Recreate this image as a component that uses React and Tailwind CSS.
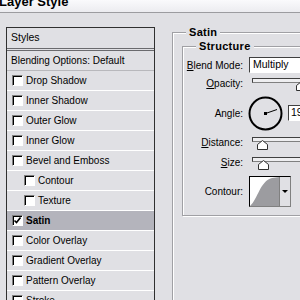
import React from 'react';

const font = { fontFamily: '"Liberation Sans", Arial, sans-serif' };

const styles = [
  { label: 'Drop Shadow' },
  { label: 'Inner Shadow' },
  { label: 'Outer Glow' },
  { label: 'Inner Glow' },
  { label: 'Bevel and Emboss' },
  { label: 'Contour', indent: true },
  { label: 'Texture', indent: true },
  { label: 'Satin', checked: true, active: true },
  { label: 'Color Overlay' },
  { label: 'Gradient Overlay' },
  { label: 'Pattern Overlay' },
  { label: 'Stroke' },
];

const Check = ({ checked }) => (
  <span className="w-[11px] h-[11px] shrink-0 bg-white border border-t-[#808080] border-l-[#808080] border-b-white border-r-white shadow-[inset_1px_1px_0_#000] flex items-center justify-center">
    {checked && (
      <svg width="9" height="9" viewBox="0 0 9 9">
        <path d="M1.5 4.5 L3.5 6.5 L7.5 1.5" stroke="#000" strokeWidth="1.6" fill="none" />
      </svg>
    )}
  </span>
);

const Thumb = ({ left }) => (
  <svg width="11" height="10" viewBox="0 0 11 10" className="absolute top-[0px]" style={{ left }}>
    <path d="M0.5 9.5 L0.5 4.5 L5.5 0.5 L10.5 4.5 L10.5 9.5 Z" fill="#fff" stroke="#303030" />
  </svg>
);

const Slider = ({ pos }) => (
  <div className="relative w-[100px] h-[10px] mt-[6px] shrink-0">
    <div className="h-[5px] bg-[#eeeef0] border border-t-[#404040] border-l-[#404040] border-b-[#808080] border-r-[#808080] -mt-[3px]" />
    <Thumb left={pos} />
  </div>
);

const Label = ({ u, rest }) => (
  <span className="w-[60px] text-right text-[10px] text-black shrink-0">
    {u ? <u>{u}</u> : null}
    {rest}
  </span>
);

export default function App() {
  return (
    <div className="w-[300px] h-[300px] overflow-hidden bg-[#e0e0e4] text-black select-none" style={font}>
      <div className="h-[13px] bg-gradient-to-b from-[#fafafc] to-[#ececf0] border-b border-[#9c9ca0] overflow-hidden">
        <div className="text-[13px] font-bold leading-[13px] -mt-[5px] -ml-[1px]">Layer Style</div>
      </div>
      <div className="flex">
        <div className="ml-[6px] mt-[14px] w-[149px] h-[290px] shrink-0 border border-[#303030] bg-[#e0e0e4]">
          <div className="h-[23px] flex items-center pl-[4px] text-[10.5px] border-b-[3px] border-double border-[#6a6a6e]">Styles</div>
          <div className="h-[20px] flex items-center pl-[4px] text-[10px] border-b border-[#b8b8bc]">Blending Options: Default</div>
          {styles.map((s) => (
            <div
              key={s.label}
              className={`h-[20px] flex items-center gap-[3px] text-[10px] border-b border-white ${s.indent ? 'pl-[17px]' : 'pl-[5px]'} ${s.active ? 'bg-[#b4b4bc] font-bold' : ''}`}
            >
              <Check checked={s.checked} />
              <span>{s.label}</span>
            </div>
          ))}
        </div>
        <div className="ml-[17px] mt-[13px] w-[200px] shrink-0">
          <fieldset className="border border-[#a0a0a4] shadow-[1px_1px_0_#fff,inset_1px_1px_0_#fff] w-[200px] h-[300px]">
            <legend className="ml-[13px] px-[3px] bg-[#e0e0e4] text-[11px] font-bold tracking-[0.3px] leading-[13px]">Satin</legend>
            <fieldset className="ml-[9px] border border-[#a0a0a4] shadow-[1px_1px_0_#fff,inset_1px_1px_0_#fff] w-[200px] pt-[4px] pb-[8px] mt-[1px]">
              <legend className="ml-[13px] px-[3px] bg-[#e0e0e4] text-[11px] font-bold tracking-[0.3px] leading-[13px]">Structure</legend>
              <div className="flex flex-col">
                <div className="h-[16px] flex items-center gap-[6px]">
                  <Label u="B" rest="lend Mode:" />
                  <div className="h-[16px] flex-1 bg-white border border-t-[#404040] border-l-[#404040] border-b-white border-r-white flex items-center pl-[3px] text-[10.5px]">Multiply</div>
                </div>
                <div className="h-[20px] flex items-center gap-[9px]">
                  <Label u="O" rest="pacity:" />
                  <Slider pos={44} />
                </div>
                <div className="h-[34px] mt-[3px] flex items-center gap-[5px]">
                  <Label rest="Angle:" />
                  <svg width="35" height="35" viewBox="0 0 35 35" className="shrink-0">
                    <circle cx="17.5" cy="17.5" r="16" fill="none" stroke="#000" strokeWidth="2" />
                    <line x1="17.5" y1="17.5" x2="29" y2="13.5" stroke="#000" strokeWidth="1" />
                    <rect x="16" y="16" width="3" height="3" fill="#000" />
                  </svg>
                  <div className="h-[16px] w-[30px] bg-white border border-t-[#404040] border-l-[#404040] border-b-white border-r-white flex items-center pl-[2px] text-[10.5px]">19</div>
                </div>
                <div className="h-[20px] mt-[2px] flex items-center gap-[9px]">
                  <Label u="D" rest="istance:" />
                  <Slider pos={5} />
                </div>
                <div className="h-[20px] flex items-center gap-[9px]">
                  <Label u="S" rest="ize:" />
                  <Slider pos={6} />
                </div>
                <div className="h-[31px] mt-[4px] flex items-center gap-[6px]">
                  <Label rest="Contour:" />
                  <div className="w-[42px] h-[31px] flex border border-t-[#000] border-l-[#000] border-b-[#808080] border-r-[#808080] bg-white">
                    <svg width="29" height="29" viewBox="0 0 29 29" className="shrink-0">
                      <path d="M0 29 C8 22 10 4 22 1 L29 0 L29 29 Z" fill="#9c9ca0" />
                    </svg>
                    <div className="flex-1 bg-[#e0e0e4] border-l border-[#808080] flex items-center justify-center">
                      <svg width="6" height="4" viewBox="0 0 6 4">
                        <path d="M0 0 L6 0 L3 3 Z" fill="#000" />
                      </svg>
                    </div>
                  </div>
                </div>
              </div>
            </fieldset>
          </fieldset>
        </div>
      </div>
    </div>
  );
}
